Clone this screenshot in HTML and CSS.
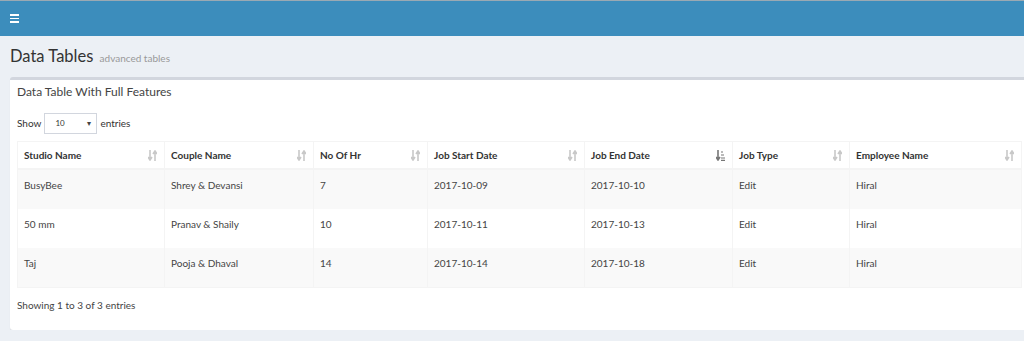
FILE: index.html
```html
<!DOCTYPE html>
<html>
  <head>
    <title>Data Tables</title>
    <link rel="stylesheet" href="styles.css">
  </head>
  <body>
    <header class="topbar">
      <span class="menu-toggle"><i></i><i></i><i></i></span>
    </header>
    <section class="content-header">
      <h1>Data Tables <small>advanced tables</small></h1>
    </section>
    <section class="content">
      <div class="box">
        <div class="box-header">
          <h3 class="box-title">Data Table With Full Features</h3>
        </div>
        <div class="box-body">
          <div class="length">
            <label>Show</label>
            <span class="select">10 <span class="caret">&#9662;</span></span>
            <label>entries</label>
          </div>
          <table class="data">
            <colgroup>
              <col style="width:147px"><col style="width:149px"><col style="width:114px"><col style="width:157px"><col style="width:148px"><col style="width:117px"><col>
            </colgroup>
            <thead>
              <tr>
                <th class="sorting">Studio Name</th>
                <th class="sorting">Couple Name</th>
                <th class="sorting">No Of Hr</th>
                <th class="sorting">Job Start Date</th>
                <th class="sorting active">Job End Date</th>
                <th class="sorting">Job Type</th>
                <th class="sorting">Employee Name</th>
              </tr>
            </thead>
            <tbody>
              <tr>
                <td>BusyBee</td><td>Shrey &amp; Devansi</td><td>7</td><td>2017-10-09</td><td>2017-10-10</td><td>Edit</td><td>Hiral</td>
              </tr>
              <tr>
                <td>50 mm</td><td>Pranav &amp; Shaily</td><td>10</td><td>2017-10-11</td><td>2017-10-13</td><td>Edit</td><td>Hiral</td>
              </tr>
              <tr>
                <td>Taj</td><td>Pooja &amp; Dhaval</td><td>14</td><td>2017-10-14</td><td>2017-10-18</td><td>Edit</td><td>Hiral</td>
              </tr>
            </tbody>
          </table>
          <div class="info">Showing 1 to 3 of 3 entries</div>
        </div>
      </div>
    </section>
  </body>
</html>
```

FILE: styles.css
```css
/* page */
body {
  margin: 0;
  background: #ecf0f5;
  font-family: Lato, "Liberation Sans", sans-serif;
  font-size: 10px;
  color: #333;
  overflow: hidden;
}

/* top bar */
.topbar {
  height: 35px;
  background: #3c8dbc;
  border-top: 1px solid #9aa9b3;
  display: flex;
  align-items: center;
  padding-left: 10px;
}
.menu-toggle {
  display: flex;
  flex-direction: column;
  gap: 2px;
}
.menu-toggle i {
  display: block;
  width: 9px;
  height: 1.5px;
  background: #fff;
}

/* title */
.content-header {
  padding: 9px 10px 0 10px;
  height: 32px;
}
.content-header h1 {
  margin: 0;
  font-size: 16.5px;
  font-weight: 400;
  color: #333;
  line-height: 22px;
}
.content-header small {
  font-size: 10px;
  color: #999;
  padding-left: 2px;
}

/* box */
.content {
  padding: 0 0 0 10px;
}
.box {
  width: 1030px;
  background: #fff;
  border-top: 3px solid #d2d6de;
  border-radius: 3px;
  box-shadow: 0 1px 1px rgba(0, 0, 0, 0.1);
  height: 250px;
}
.box-header {
  padding: 4px 7px 0 7px;
  height: 24px;
}
.box-title {
  margin: 0;
  font-size: 12px;
  font-weight: 400;
  color: #444;
  line-height: 16px;
}
.box-body {
  padding: 4px 7px 0 7px;
}

/* length select */
.length {
  display: flex;
  align-items: center;
  gap: 3px;
  height: 22px;
}
.select {
  width: 53px;
  height: 21px;
  border: 1px solid #d2d6de;
  box-sizing: border-box;
  display: flex;
  align-items: center;
  justify-content: space-between;
  padding: 0 5px 0 10px;
  font-size: 8px;
}
.caret {
  font-size: 8px;
  color: #444;
}

/* table */
.data {
  margin-top: 7px;
  width: 1005px;
  border-collapse: collapse;
  table-layout: fixed;
  border: 1px solid #f4f4f4;
}
.data th {
  text-align: left;
  font-weight: 700;
  height: 26px;
  padding: 0 6px;
  border-bottom: 2px solid #f4f4f4;
  border-right: 1px solid #f4f4f4;
  color: #333;
  position: relative;
}
.data th.sorting::after {
  content: "";
  position: absolute;
  right: 7px;
  top: 8px;
  width: 9px;
  height: 11px;
  background: url("data:image/svg+xml;utf8,<svg xmlns='http://www.w3.org/2000/svg' width='9' height='11' viewBox='0 0 9 11'><path d='M2 0v9M0 7l2 3 2-3M7 11V2M5 4l2-3 2 3' stroke='%23c8c8c8' stroke-width='1.6' fill='none'/></svg>") no-repeat;
}
.data th.active::after {
  background: url("data:image/svg+xml;utf8,<svg xmlns='http://www.w3.org/2000/svg' width='9' height='11' viewBox='0 0 9 11'><path d='M2 0v9M0 7l2 3 2-3' stroke='%23777' stroke-width='1.6' fill='none'/><path d='M5 2h2M5 5h3M5 8h4M5 10.3h4' stroke='%23777' stroke-width='1.2'/></svg>") no-repeat;
}
.data td {
  vertical-align: top;
  padding: 9px 6px 0 6px;
  height: 30px;
  border-right: 1px solid #f4f4f4;
  color: #444;
}
.data tbody tr:nth-child(odd) {
  background: #f9f9f9;
}

.info {
  padding-top: 11px;
  color: #444;
}
```
